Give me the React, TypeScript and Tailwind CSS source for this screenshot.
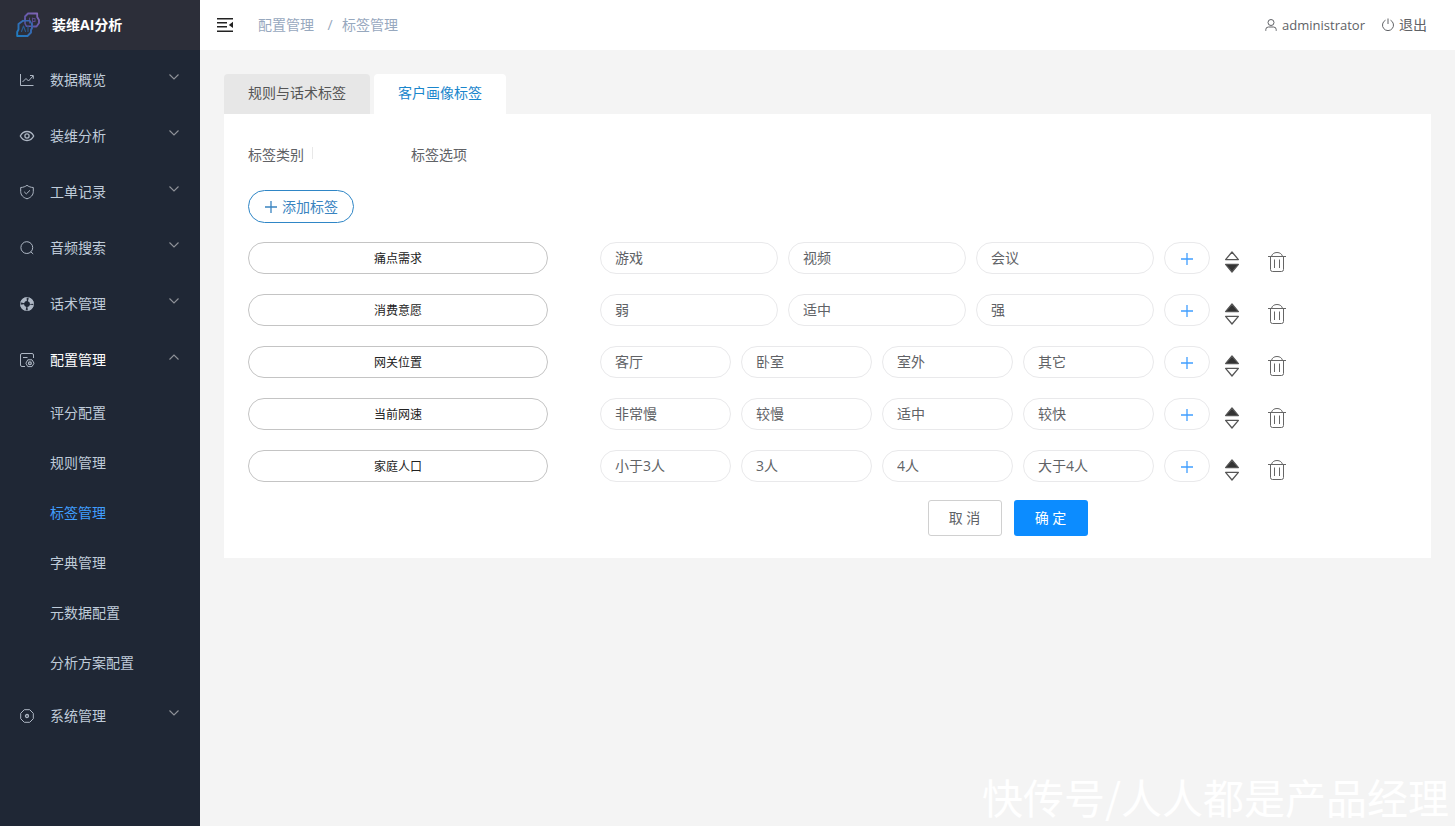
import React, { useState } from 'react';

interface IconProps {
  className?: string;
}

interface MenuItem {
  label: string;
  icon: React.FC<IconProps>;
  active?: boolean;
  children?: string[];
}

interface TagRow {
  id: number;
  name: string;
  options: string[];
}

const LogoIcon: React.FC<IconProps> = ({ className }) => (
  <svg className={className} viewBox="0 0 24 26" fill="none" strokeLinejoin="round" strokeLinecap="round">
    <defs>
      <linearGradient id="logoPurple" x1="0" y1="1" x2="1" y2="0">
        <stop offset="0" stopColor="#4f4fa0" />
        <stop offset="1" stopColor="#8468b8" />
      </linearGradient>
      <linearGradient id="logoBlue" x1="0" y1="1" x2="1" y2="0">
        <stop offset="0" stopColor="#1f7cc0" />
        <stop offset="1" stopColor="#4360ac" />
      </linearGradient>
    </defs>
    <path d="M9 7V4.500L12 1.500H21.200V5L23 8V11L20.500 14.500H17.500" stroke="url(#logoPurple)" strokeWidth="1.800" />
    <path d="M9 7V11.500L10.500 14.300H14.500" stroke="url(#logoPurple)" strokeWidth="1.500" />
    <path d="M13.500 6V11M16.500 6V12M16.500 6.500H19V9.500H16.500" stroke="#59498c" strokeWidth="1.100" />
    <path d="M7 8.800L2.500 12V17.500L1.200 20V24H11.500L15 20.500V18L16 16V12.500" stroke="url(#logoBlue)" strokeWidth="1.900" />
    <path d="M7 8.800H14L16 12.500" stroke="url(#logoBlue)" strokeWidth="1.500" />
    <path d="M5.500 19.500L7.500 14L9.500 19.500M12 14V19.500" stroke="#285c94" strokeWidth="1.100" />
  </svg>
);

const ChartIcon: React.FC<IconProps> = ({ className }) => (
  <svg className={className} viewBox="0 0 16 16" fill="none" stroke="currentColor" strokeWidth="1">
    <path d="M1.500 2V13.500H14.500" />
    <path d="M3.500 10L7 6.500L9.500 9L14 4" />
    <path d="M11 3.500H14.300V6.800" />
  </svg>
);

const EyeIcon: React.FC<IconProps> = ({ className }) => (
  <svg className={className} viewBox="0 0 16 16" fill="none" stroke="currentColor" strokeWidth="1.300">
    <path d="M1.300 8C2.800 5 5.200 3.500 8 3.500S13.200 5 14.700 8C13.200 11 10.800 12.500 8 12.500S2.800 11 1.300 8Z" />
    <circle cx="8" cy="8" r="2.100" />
  </svg>
);

const ShieldIcon: React.FC<IconProps> = ({ className }) => (
  <svg className={className} viewBox="0 0 16 16" fill="none" stroke="currentColor" strokeWidth="1">
    <path d="M8 1.300C9.600 2.600 11.800 3.400 14.300 3.500V7.500C14.300 11 12 13.500 8 14.800C4 13.500 1.700 11 1.700 7.500V3.500C4.200 3.400 6.400 2.600 8 1.300Z" />
    <path d="M5.200 7.800L7.300 9.900L11 6.300" />
  </svg>
);

const SearchIcon: React.FC<IconProps> = ({ className }) => (
  <svg className={className} viewBox="0 0 16 16" fill="none" stroke="currentColor" strokeWidth="1">
    <circle cx="7.800" cy="7.600" r="5.900" />
    <path d="M11.800 11.800L14.200 14" />
  </svg>
);

const LifebuoyIcon: React.FC<IconProps> = ({ className }) => (
  <svg className={className} viewBox="0 0 16 16" fill="none" stroke="currentColor">
    <circle cx="8" cy="8" r="4.900" strokeWidth="3.800" strokeDasharray="5.900 1.797" strokeDashoffset="-0.898" />
    <circle cx="8" cy="8" r="6.500" strokeWidth="0.700" />
  </svg>
);

const ConfigIcon: React.FC<IconProps> = ({ className }) => (
  <svg className={className} viewBox="0 0 16 16" fill="none" stroke="currentColor" strokeWidth="1">
    <path d="M6 14.500H3Q1.500 14.500 1.500 13V3Q1.500 1.500 3 1.500H13Q14.500 1.500 14.500 3V6" />
    <path d="M4 5.500H8.500" />
    <path d="M8.800 7.800H13L15 11.200L13 14.600H8.800L6.900 11.200Z" strokeLinejoin="round" />
    <circle cx="10.900" cy="11.200" r="1.400" strokeWidth="1.300" />
  </svg>
);

const SystemIcon: React.FC<IconProps> = ({ className }) => (
  <svg className={className} viewBox="0 0 16 16" fill="none" stroke="currentColor">
    <path d="M5.300 1.700H10.700L14.300 5.300V10.700L10.700 14.300H5.300L1.700 10.700V5.300Z" strokeLinejoin="round" />
    <circle cx="8" cy="8" r="1.500" strokeWidth="1.300" />
  </svg>
);

const ChevronIcon: React.FC<IconProps> = ({ className }) => (
  <svg className={className} viewBox="0 0 12 12" fill="none" stroke="currentColor" strokeWidth="1.100">
    <path d="M1.500 3.500L6 8L10.500 3.500" />
  </svg>
);

const FoldIcon: React.FC<IconProps> = ({ className }) => (
  <svg className={className} viewBox="0 0 16 16" fill="currentColor">
    <path d="M0 1H16V2.500H0ZM0 5H10V6.500H0ZM0 9H10V10.500H0ZM0 13.500H16V15H0ZM16 4.800V11L11.800 7.900Z" />
  </svg>
);

const UserIcon: React.FC<IconProps> = ({ className }) => (
  <svg className={className} viewBox="0 0 14 14" fill="none" stroke="currentColor" strokeWidth="1">
    <circle cx="7" cy="4.500" r="3" />
    <path d="M1.800 12.800V11.500Q1.800 9 4.500 9H9.500Q12.200 9 12.200 11.500V12.800" />
  </svg>
);

const PowerIcon: React.FC<IconProps> = ({ className }) => (
  <svg className={className} viewBox="0 0 14 14" fill="none" stroke="currentColor" strokeWidth="1">
    <path d="M4.500 2.200A5.500 5.500 0 1 0 9.500 2.200" />
    <path d="M7 0.500V6" />
  </svg>
);

const PlusIcon: React.FC<IconProps> = ({ className }) => (
  <svg className={className} viewBox="0 0 14 14" fill="none" stroke="currentColor" strokeWidth="1.300">
    <path d="M7 1V13M1 7H13" />
  </svg>
);

// the filled arrow shows the direction the row can move in
const SortIcon: React.FC<IconProps & { down: boolean }> = ({ className, down }) => (
  <svg className={className} viewBox="0 0 16 24" stroke="#555" strokeWidth="1.300" strokeLinejoin="round">
    <path d="M8 2L14.400 9.600H1.600Z" fill={down ? 'none' : '#333'} />
    <path d="M8 22L14.400 14.400H1.600Z" fill={down ? '#333' : 'none'} />
  </svg>
);

const TrashIcon: React.FC<IconProps> = ({ className }) => (
  <svg className={className} viewBox="0 0 20 24" fill="none" stroke="#666" strokeWidth="1">
    <path d="M1 6.500H19" />
    <path d="M4.500 6.500C5 4 7 2.500 10 2.500S15 4 15.500 6.500" />
    <path d="M3.500 6.500V19.500Q3.500 21.500 5.500 21.500H14.500Q16.500 21.500 16.500 19.500V6.500" />
    <path d="M7.500 9.500V18M12.500 9.500V18" />
  </svg>
);

const menu: MenuItem[] = [
  { label: '数据概览', icon: ChartIcon },
  { label: '装维分析', icon: EyeIcon },
  { label: '工单记录', icon: ShieldIcon },
  { label: '音频搜索', icon: SearchIcon },
  { label: '话术管理', icon: LifebuoyIcon },
  {
    label: '配置管理',
    icon: ConfigIcon,
    active: true,
    children: ['评分配置', '规则管理', '标签管理', '字典管理', '元数据配置', '分析方案配置'],
  },
  { label: '系统管理', icon: SystemIcon },
];

const initialRows: TagRow[] = [
  { id: 1, name: '痛点需求', options: ['游戏', '视频', '会议'] },
  { id: 2, name: '消费意愿', options: ['弱', '适中', '强'] },
  { id: 3, name: '网关位置', options: ['客厅', '卧室', '室外', '其它'] },
  { id: 4, name: '当前网速', options: ['非常慢', '较慢', '适中', '较快'] },
  { id: 5, name: '家庭人口', options: ['小于3人', '3人', '4人', '大于4人'] },
];

const Sidebar: React.FC = () => (
  <aside className="w-[200px] shrink-0 bg-[#1f2735] text-[#bfcbd9]">
    <div className="flex h-[50px] items-center gap-3 bg-[#2c2e39] pl-4">
      <LogoIcon className="h-[26px] w-6" />
      <h1 className="text-sm font-bold text-white">装维AI分析</h1>
    </div>
    <nav className="pt-0.5">
      {menu.map((item) => (
        <div key={item.label}>
          <button type="button" className={`flex h-14 w-full items-center pr-5 pl-[19px] ${item.active ? 'text-white' : ''}`}>
            <item.icon className="mr-[15px] h-4 w-4 text-[#aeb7c4]" />
            {item.label}
            <ChevronIcon className={`mb-1.5 ml-auto h-3 w-3 text-[#909399] ${item.active ? 'rotate-180' : ''}`} />
          </button>
          {item.children?.map((child) => (
            <a
              key={child}
              href="#"
              className={`flex h-[50px] items-center pl-[50px] ${child === '标签管理' ? 'text-[#409eff]' : ''}`}
            >
              {child}
            </a>
          ))}
        </div>
      ))}
    </nav>
  </aside>
);

const Header: React.FC = () => (
  <header className="flex h-[50px] items-center bg-white pr-7 pl-[17px]">
    <button type="button" aria-label="折叠菜单" className="text-[#222]">
      <FoldIcon className="h-4 w-4" />
    </button>
    <nav className="ml-[25px] flex text-[#97a8be]">
      <a href="#">配置管理</a>
      <span className="w-7 pl-1 text-center">/</span>
      <a href="#">标签管理</a>
    </nav>
    <div className="ml-auto flex items-center gap-4 text-[#606266]">
      <a href="#" className="flex items-center gap-1 text-[13px]">
        <UserIcon className="h-[14px] w-[14px]" />
        administrator
      </a>
      <button type="button" className="flex items-center gap-1">
        <PowerIcon className="h-[14px] w-[14px]" />
        退出
      </button>
    </div>
  </header>
);

const App: React.FC = () => {
  const [rows, setRows] = useState<TagRow[]>(initialRows);

  const addRow = () => setRows([...rows, { id: Date.now(), name: '', options: [''] }]);
  const removeRow = (id: number) => setRows(rows.filter((row) => row.id !== id));
  const addOption = (id: number) =>
    setRows(rows.map((row) => (row.id === id ? { ...row, options: [...row.options, ''] } : row)));
  const moveRow = (index: number) => {
    const next = [...rows];
    const target = index === 0 ? 1 : index - 1;
    if (target >= next.length) return;
    [next[index], next[target]] = [next[target], next[index]];
    setRows(next);
  };

  return (
    <div className="relative flex min-h-screen bg-[#f4f4f4] font-['Open_Sans','Noto_Sans_CJK_SC',sans-serif] text-sm">
      <Sidebar />
      <div className="min-w-0 flex-1">
        <Header />
        <main className="p-6">
          {/* Tabs */}
          <div role="tablist" className="flex gap-1">
            <button type="button" role="tab" aria-selected="false" className="h-10 rounded-t bg-[#e7e7e7] px-6 pb-0.5 text-[#555]">
              规则与话术标签
            </button>
            <button type="button" role="tab" aria-selected="true" className="h-10 rounded-t bg-white px-6 pb-0.5 text-[#1a86cc]">
              客户画像标签
            </button>
          </div>

          <section className="bg-white px-6 pt-[31px] pb-[22px] text-[#606266]">
            <div className="flex items-center leading-5">
              <span className="w-16">标签类别</span>
              <span className="mb-1 h-3 w-[99px] border-l border-[#e8e8e8]" />
              <span>标签选项</span>
            </div>

            <button
              type="button"
              onClick={addRow}
              className="mt-[25px] flex h-[33px] items-center gap-1 rounded-full border border-[#2f86c6] px-[15px] text-[#3a84c0]"
            >
              <PlusIcon className="h-[14px] w-[14px]" />
              添加标签
            </button>

            {/* Tag rows */}
            <div className="mt-[19px] flex flex-col gap-5">
              {rows.map((row, index) => (
                <div key={row.id} className="flex max-w-[1040px] items-start">
                  <input
                    aria-label="标签类别"
                    defaultValue={row.name}
                    className="h-8 w-[300px] rounded-full border border-[#c4c4c4] px-4 text-center text-xs text-[#222]"
                  />
                  <div className="ml-[52px] flex min-w-0 flex-1 gap-2.5">
                    {row.options.map((option, i) => (
                      <input
                        key={i}
                        aria-label={`${row.name}选项${i + 1}`}
                        defaultValue={option}
                        className="h-8 w-0 min-w-0 flex-1 rounded-full border border-[#e9e9eb] px-3.5 pb-0.5"
                      />
                    ))}
                  </div>
                  <button
                    type="button"
                    aria-label="添加选项"
                    onClick={() => addOption(row.id)}
                    className="ml-2.5 flex h-8 w-[46px] items-center justify-center rounded-full border border-[#e9e9eb] pt-0.5 text-[#409eff]"
                  >
                    <PlusIcon className="h-[14px] w-[14px]" />
                  </button>
                  <button type="button" aria-label="移动" onClick={() => moveRow(index)} className="mt-2 ml-3.5">
                    <SortIcon down={index === 0} className="h-6 w-4" />
                  </button>
                  <button type="button" aria-label="删除" onClick={() => removeRow(row.id)} className="mt-2 ml-[27px] pr-px">
                    <TrashIcon className="h-6 w-5" />
                  </button>
                </div>
              ))}
            </div>

            <div className="mt-[18px] flex justify-center gap-3 pl-[360px]">
              <button type="button" className="h-9 w-[74px] rounded-[3px] border border-[#d0d0d0]">
                取 消
              </button>
              <button type="button" className="h-9 w-[74px] rounded-[3px] bg-[#0c8cff] text-white">
                确 定
              </button>
            </div>
          </section>
        </main>
      </div>

      <div className="pointer-events-none absolute right-1.5 bottom-0 font-['Noto_Sans_CJK_SC',sans-serif] text-[41px] leading-[60px] text-white">
        快传号/人人都是产品经理
      </div>
    </div>
  );
};

export default App;
